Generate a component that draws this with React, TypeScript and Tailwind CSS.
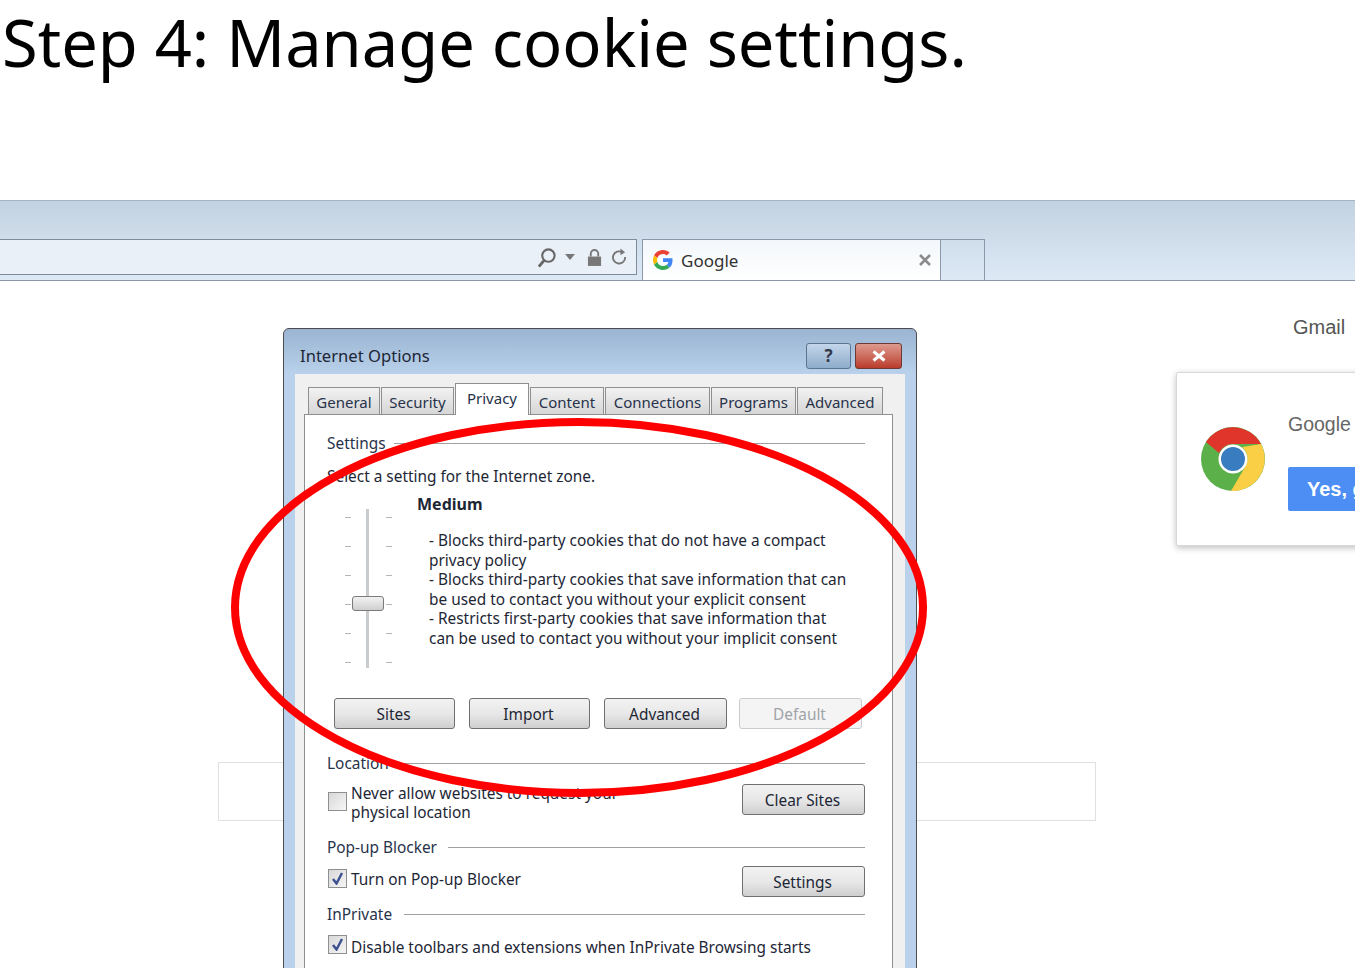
const uiFont = "font-['Noto_Sans',sans-serif]";

const ButtonBase = ({ label, w, disabled }: { label: string; w: string; disabled?: boolean }) => (
  <div
    className={`${w} h-[31px] shrink-0 flex items-center justify-center pt-[2px] pr-[2px] rounded-[3px] border text-[15.4px] ${
      disabled
        ? "border-[#c9cbce] bg-[#f4f4f4] text-[#a0a3a8]"
        : "border-[#707070] bg-gradient-to-b from-[#f2f2f2] via-[#e8e8e8] to-[#cfcfcf] text-[#1d2635]"
    }`}
  >
    {label}
  </div>
);

const Heading = ({ label, gap }: { label: string; gap: string }) => (
  <div className={`flex items-center h-[20px] ${gap} text-[15.4px] text-[#27324a]`}>
    <span className="pt-[2px]">{label}</span>
    <div className="flex-1 h-px bg-[#a0a0a0]" />
  </div>
);

const Check = ({ on }: { on?: boolean }) => (
  <div className="w-[19px] h-[19px] shrink-0 border border-[#8e8f8f] bg-gradient-to-br from-[#d8d8d8] to-[#f6f6f6] p-[2px]">
    {on && (
      <svg viewBox="0 0 13 13" className="w-[13px] h-[13px]">
        <path d="M2 7 L5.500 11.500 L11 1" fill="none" stroke="#3c4f8f" strokeWidth="2.400" />
      </svg>
    )}
  </div>
);

const Tab = ({ label, w }: { label: string; w: string }) => (
  <div className={`${w} h-[27px] shrink-0 flex items-center justify-center pt-[2px] border border-b-0 border-[#8e8f8f] bg-gradient-to-b from-[#f2f2f2] to-[#d6d6d6] text-[15px] text-[#27324a]`}>
    {label}
  </div>
);

const Ticks = () => (
  <div className="absolute inset-0 pt-[23px] pb-[11px] pl-[18px] flex flex-col justify-between">
    {[0, 1, 2, 3, 4, 5].map((i) => (
      <div key={i} className="w-[47px] h-px flex justify-between">
        <div className="w-[6px] h-px bg-[#b5b5b5]" />
        <div className="w-[6px] h-px bg-[#b5b5b5]" />
      </div>
    ))}
  </div>
);

const ChromeLogo = () => (
  <svg viewBox="0 0 64 64" className="w-[64px] h-[64px] shrink-0">
    <circle cx="32" cy="32" r="32" fill="#5cb04a" />
    <path d="M5 15 A32 32 0 0 1 60 17 L32 17 A15 15 0 0 0 18 26 Z" fill="#e0352b" />
    <path d="M60 17 A32 32 0 0 1 30 64 L44 40 A15 15 0 0 0 41 20 Z" fill="#fbcf45" />
    <circle cx="32" cy="32" r="14.500" fill="#fff" />
    <circle cx="32" cy="32" r="12" fill="#3a7cc0" />
  </svg>
);

const GoogleG = () => (
  <svg viewBox="0 0 48 48" className="w-[20px] h-[20px] shrink-0">
    <path fill="#EA4335" d="M24 9.5c3.5 0 6.7 1.3 9.1 3.5l6.8-6.8C35.800 2.400 30.200 0 24 0 14.600 0 6.500 5.400 2.600 13.200l7.900 6.200C12.400 13.600 17.700 9.500 24 9.500z" />
    <path fill="#4285F4" d="M46.900 24.500c0-1.600-.2-3.100-.4-4.500H24v9h12.900c-.6 3-2.200 5.500-4.700 7.200l7.700 6c4.500-4.200 7-10.300 7-17.700z" />
    <path fill="#FBBC05" d="M10.500 28.600c-.5-1.400-.8-3-.8-4.600s.3-3.200.8-4.600l-7.900-6.200C.9 16.500 0 20.100 0 24s.9 7.500 2.600 10.800l7.900-6.200z" />
    <path fill="#34A853" d="M24 48c6.500 0 11.900-2.100 15.900-5.800l-7.700-6c-2.200 1.400-4.900 2.300-8.200 2.300-6.300 0-11.600-4.200-13.500-9.900l-7.900 6.200C6.500 42.600 14.600 48 24 48z" />
  </svg>
);

export default function App() {
  return (
    <div className={`w-[1355px] h-[968px] overflow-hidden bg-white ${uiFont}`}>
      <h1 className="h-[200px] pl-[2px] text-[65px] leading-[84px] text-black font-['Noto_Sans',sans-serif]">
        Step 4: Manage cookie settings.
      </h1>

      {/* browser toolbar */}
      <div className="h-[81px] flex items-end border-t border-b border-t-[#a5b3c6] border-b-[#8b98aa] bg-gradient-to-b from-[#c3d2e1] to-[#dde9f5]">
        <div className="w-[637px] h-[36px] mb-[5px] flex items-center justify-end pr-[9px] border border-l-0 border-[#7f8b9a] bg-[#e9f0f8] text-[#707070]">
          <svg viewBox="0 0 22 22" className="w-[21px] h-[21px]">
            <circle cx="13" cy="9" r="6.500" fill="none" stroke="#666" strokeWidth="2.200" />
            <path d="M8.500 14 L3 20.500" stroke="#666" strokeWidth="3" />
          </svg>
          <svg viewBox="0 0 10 6" className="w-[10px] h-[6px] ml-[8px]">
            <path d="M0 0 H10 L5 6 Z" fill="#777" />
          </svg>
          <svg viewBox="0 0 16 20" className="w-[15px] h-[19px] ml-[12px]">
            <path d="M4 9 V6 A4 4 0 0 1 12 6 V9" fill="none" stroke="#777" strokeWidth="2" />
            <rect x="1" y="9" width="14" height="10" fill="#777" />
          </svg>
          <svg viewBox="0 0 16 20" className="w-[15px] h-[20px] ml-[10px]">
            <path d="M11 5 A6.500 6.500 0 1 0 14 10" fill="none" stroke="#777" strokeWidth="2" />
            <path d="M9 1 L14 5 L9 8 Z" fill="#777" />
          </svg>
        </div>
        <div className="w-[5px]" />
        <div className="w-[299px] h-[41px] flex items-center pl-[10px] pr-[9px] border border-b-0 border-[#8b98aa] bg-gradient-to-b from-[#f3f7fb] to-white text-[17px] text-[#333]">
          <GoogleG />
          <span className="ml-[8px] pt-[2px] flex-1">Google</span>
          <svg viewBox="0 0 12 12" className="w-[12px] h-[12px]">
            <path d="M1 1 L11 11 M11 1 L1 11" stroke="#8a8a8a" strokeWidth="2.500" />
          </svg>
        </div>
        <div className="w-[44px] h-[41px] border border-l-0 border-b-0 border-[#8b98aa]" />
      </div>

      {/* page under the toolbar */}
      <div className="relative h-[687px] overflow-hidden">
        <div className="absolute left-[218px] top-[481px] w-[878px] h-[59px] border border-[#e0e0e0]" />

        <div className="absolute left-[1293px] top-[34px] text-[20px] leading-[24px] text-[#555] font-['Liberation_Sans',sans-serif]">
          Gmail
        </div>
        <div className="absolute left-[1176px] top-[91px] w-[300px] h-[174px] flex items-center gap-[23px] pl-[24px] bg-white border border-[#d8d8d8] rounded-[2px] shadow-[0_2px_6px_rgba(0,0,0,0.25)] font-['Liberation_Sans',sans-serif]">
          <ChromeLogo />
          <div className="flex flex-col gap-[31px] mt-[5px]">
            <div className="text-[19.500px] leading-[24px] text-[#666]">Google</div>
            <div className="w-[200px] h-[44px] flex items-center pl-[19px] bg-[#4d8ef5] rounded-[2px] text-[20px] font-bold text-white">
              Yes, get
            </div>
          </div>
        </div>

        {/* Internet Options dialog */}
        <div className="absolute left-[283px] top-[47px] w-[634px] h-[660px] flex flex-col rounded-t-[6px] border border-[#4c4c4c] bg-gradient-to-b from-[#9ab4d2] to-[#b9d1ea] to-[45px]">
          <div className="h-[45px] shrink-0 flex items-center pt-[8px] pl-[16px] pr-[14px] text-[16.600px] text-[#1d2635]">
            <span className="flex-1 pt-[2px]">Internet Options</span>
            <div className="w-[45px] h-[26px] flex items-center justify-center rounded-[3px] border border-[#5d7490] bg-gradient-to-b from-[#c3d6ea] to-[#8eaccb] text-[17px] font-bold text-[#33384a]">?</div>
            <div className="w-[47px] h-[26px] ml-[4px] flex items-center justify-center rounded-[3px] border border-[#6b3a36] bg-gradient-to-b from-[#dd9a8e] to-[#b93a2b] text-white">
              <svg viewBox="0 0 16 12" className="w-[16px] h-[12px]">
                <path d="M2.500 1.500 L13.500 10.500 M13.500 1.500 L2.500 10.500" stroke="#fff" strokeWidth="3" />
              </svg>
            </div>
          </div>

          <div className="flex-1 ml-[11px] mr-[11px] bg-[#f0f0f0] pt-[13px] pl-[9px] pr-[12px] flex flex-col min-h-0">
            <div className="relative h-[27px] shrink-0 flex gap-px pl-[4px]">
              <Tab label="General" w="w-[72px]" />
              <Tab label="Security" w="w-[73px]" />
              <div className="w-[74px] h-[32px] -mt-[4px] z-10 shrink-0 flex items-center justify-center pb-[3px] border border-b-0 border-[#8e8f8f] bg-white text-[15px] text-[#27324a]">
                Privacy
              </div>
              <Tab label="Content" w="w-[74px]" />
              <Tab label="Connections" w="w-[105px]" />
              <Tab label="Programs" w="w-[85px]" />
              <Tab label="Advanced" w="w-[86px]" />
            </div>

            <div className="flex-1 bg-white border border-[#8e8f8f] pl-[22px] pr-[27px] text-[15.4px] text-[#1d2635]">
              <div className="mt-[18px]">
                <Heading label="Settings" gap="gap-[8px]" />
              </div>
              <div className="mt-[14px] h-[20px] leading-[20px]">Select a setting for the Internet zone.</div>

              <div className="mt-[7px] flex h-[180px]">
                <div className="relative w-[90px] shrink-0">
                  <Ticks />
                  <div className="absolute left-[39px] top-[15px] w-[3px] h-[159px] bg-[#c9cccf]" />
                  <div className="absolute left-[25px] top-[102px] w-[32px] h-[15px] rounded-[3px] border border-[#7a7a7a] bg-gradient-to-b from-[#f2f2f2] to-[#cfcfcf]" />
                </div>
                <div>
                  <div className="h-[20px] leading-[20px] text-[16px] font-bold">Medium</div>
                  <div className="mt-[17px] ml-[12px] w-[430px] leading-[19.6px]">
                    <div>- Blocks third-party cookies that do not have a compact</div>
                    <div>privacy policy</div>
                    <div>- Blocks third-party cookies that save information that can</div>
                    <div>be used to contact you without your explicit consent</div>
                    <div>- Restricts first-party cookies that save information that</div>
                    <div>can be used to contact you without your implicit consent</div>
                  </div>
                </div>
              </div>

              <div className="mt-[24px] pl-[7px] flex">
                <ButtonBase label="Sites" w="w-[121px]" />
                <div className="w-[14px]" />
                <ButtonBase label="Import" w="w-[121px]" />
                <div className="w-[14px]" />
                <ButtonBase label="Advanced" w="w-[123px]" />
                <div className="w-[12px]" />
                <ButtonBase label="Default" w="w-[123px]" disabled />
              </div>

              <div className="mt-[24px]">
                <Heading label="Location" gap="gap-[8px]" />
              </div>
              <div className="mt-[11px] h-[39px] flex items-start">
                <div className="pl-px pt-[8px]">
                  <Check />
                </div>
                <div className="ml-[4px] flex-1 leading-[19px]">
                  <div>Never allow websites to request your</div>
                  <div>physical location</div>
                </div>
                <ButtonBase label="Clear Sites" w="w-[123px]" />
              </div>

              <div className="mt-[14px]">
                <Heading label="Pop-up Blocker" gap="gap-[11px]" />
              </div>
              <div className="mt-[9px] h-[31px] flex items-start">
                <div className="pl-px pt-[3px]">
                  <Check on />
                </div>
                <div className="ml-[4px] mt-[4px] leading-[20px] flex-1">Turn on Pop-up Blocker</div>
                <ButtonBase label="Settings" w="w-[123px]" />
              </div>

              <div className="mt-[7px]">
                <Heading label="InPrivate" gap="gap-[12px]" />
              </div>
              <div className="mt-[11px] flex items-start">
                <div className="pl-px">
                  <Check on />
                </div>
                <div className="ml-[4px] pt-[1px]">Disable toolbars and extensions when InPrivate Browsing starts</div>
              </div>
            </div>
          </div>
        </div>

        {/* red annotation */}
        <svg className="absolute left-[220px] top-[130px] w-[720px] h-[400px] pointer-events-none" viewBox="0 0 720 400">
          <ellipse cx="359" cy="196.500" rx="344" ry="185.500" fill="none" stroke="#ff0000" strokeWidth="8" />
        </svg>
      </div>
    </div>
  );
}
